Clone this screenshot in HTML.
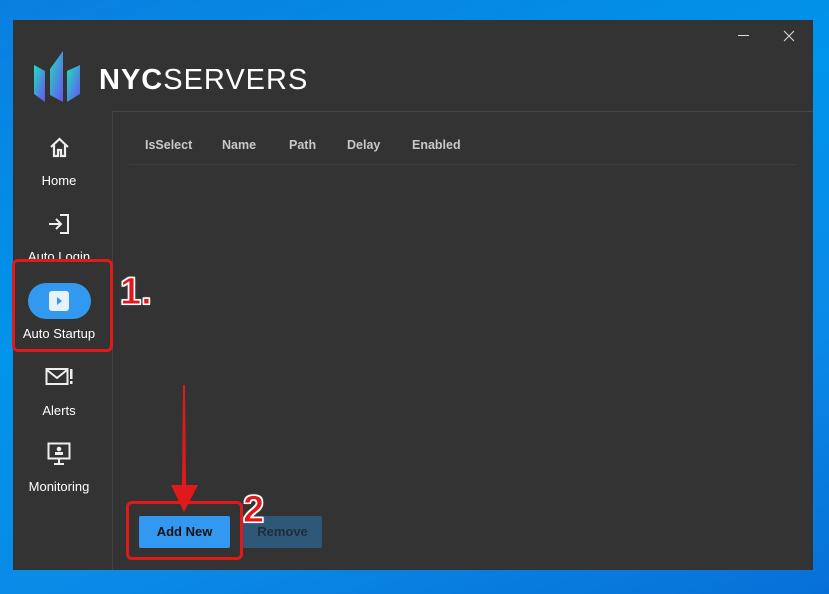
<!DOCTYPE html>
<html><head><meta charset="utf-8"><style>
*{margin:0;padding:0;box-sizing:border-box}
body{width:829px;height:594px;overflow:hidden;background:linear-gradient(160deg,#0a7fe0 0%,#0094ea 40%,#0a8ae6 70%,#0770d8 100%);font-family:"Liberation Sans",sans-serif;position:relative}
.win{position:absolute;left:13px;top:20px;width:800px;height:550px;background:#333}
.t{position:absolute;color:#fff;font-size:13px;text-align:center;width:92px;left:13px}
.hdr{position:absolute;top:138px;color:#c8c8c8;font-size:12.5px;font-weight:bold}
.ic{position:absolute}
.red{position:absolute;border:3px solid #e0191b;border-radius:6px}
.num{position:absolute;color:#e4161a;font-weight:bold;font-size:38px;line-height:44px;font-family:"Liberation Sans",sans-serif;-webkit-text-stroke:1px #fff;text-shadow:0 0 2px #fff,1px 1px 0 #fff,-1px -1px 0 #fff,1px -1px 0 #fff,-1px 1px 0 #fff}
</style></head><body>
<div class="win"></div>
<div style="position:absolute;left:738px;top:35px;width:11px;height:1px;background:#ddd"></div>
<svg class="ic" style="left:783px;top:30px" width="12" height="12"><path d="M1 1L11 11M11 1L1 11" stroke="#ddd" stroke-width="1"/></svg>
<svg class="ic" style="left:33px;top:50px" width="50" height="54">
<defs><linearGradient id="g" x1="0" y1="0" x2="1" y2="1"><stop offset="0" stop-color="#1de0c0"/><stop offset="1" stop-color="#6a50f0"/></linearGradient></defs>
<polygon points="1,15 12,21 12,52 1,44" fill="url(#g)"/>
<polygon points="17,19 30,1 30,52 17,45" fill="url(#g)"/>
<polygon points="34,21 47,15 47,44 34,52" fill="url(#g)"/>
</svg>
<div style="position:absolute;left:99px;top:62px;color:#fff;font-size:29px;letter-spacing:1px;line-height:36px"><b style="font-weight:900">NYC</b><span style="font-weight:300">SERVERS</span></div>
<div style="position:absolute;left:112px;top:111px;width:701px;height:1px;background:#444"></div>
<div style="position:absolute;left:112px;top:111px;width:1px;height:459px;background:#444"></div>
<div style="position:absolute;left:129px;top:164px;width:667px;height:1px;background:#3e3e3e"></div>
<div class="hdr" style="left:145px">IsSelect</div>
<div class="hdr" style="left:222px">Name</div>
<div class="hdr" style="left:289px">Path</div>
<div class="hdr" style="left:347px">Delay</div>
<div class="hdr" style="left:412px">Enabled</div>
<svg class="ic" style="left:49px;top:137px" width="21" height="21"><path d="M2 10L10.5 2L19 10M5 8V19H9V13H12V19H16V8" fill="none" stroke="#eee" stroke-width="2.2"/></svg>
<div class="t" style="top:173px">Home</div>
<svg class="ic" style="left:47px;top:213px" width="24" height="22"><path d="M2 11H14M9 6L14 11L9 16M13 2H21V20H13" fill="none" stroke="#eee" stroke-width="2"/></svg>
<div class="t" style="top:249px;height:13px;overflow:hidden">Auto Login</div>
<div style="position:absolute;left:28px;top:283px;width:63px;height:36px;border-radius:18px;background:#3399f0"></div>
<div style="position:absolute;left:49px;top:291px;width:20px;height:20px;border-radius:3px;background:#e8f2ff"></div>
<svg class="ic" style="left:56px;top:296px" width="8" height="10"><polygon points="1,1 6,5 1,9" fill="#3399f0"/></svg>
<div class="t" style="top:326px">Auto Startup</div>
<svg class="ic" style="left:45px;top:367px" width="30" height="20"><rect x="1.5" y="2" width="21" height="15" fill="none" stroke="#eee" stroke-width="2"/><path d="M2 3L12 11L22 3" fill="none" stroke="#eee" stroke-width="2"/><rect x="25" y="2" width="2.5" height="10" fill="#eee"/><rect x="25" y="14" width="2.5" height="3" fill="#eee"/></svg>
<div class="t" style="top:403px">Alerts</div>
<svg class="ic" style="left:47px;top:442px" width="24" height="24"><rect x="1.5" y="1.5" width="21" height="15" fill="none" stroke="#eee" stroke-width="2"/><circle cx="12" cy="7" r="2.3" fill="#eee"/><rect x="8" y="10" width="8" height="3" fill="#eee"/><rect x="11" y="17" width="2" height="4" fill="#eee"/><rect x="7" y="21" width="10" height="2" fill="#eee"/></svg>
<div class="t" style="top:479px">Monitoring</div>
<div style="position:absolute;left:139px;top:516px;width:91px;height:32px;background:#3399f0;border-radius:2px;color:#111;font-size:13px;font-weight:bold;text-align:center;line-height:32px">Add New</div>
<div style="position:absolute;left:243px;top:516px;width:79px;height:32px;background:#2f5878;border-radius:2px;color:#1e2e3c;font-size:13px;font-weight:bold;text-align:center;line-height:32px">Remove</div>
<div class="red" style="left:12px;top:259px;width:101px;height:93px"></div>
<div class="num" style="left:120px;top:270px">1.</div>
<div class="red" style="left:126px;top:501px;width:117px;height:59px"></div>
<div class="num" style="left:243px;top:488px">2</div>
<svg class="ic" style="left:168px;top:385px" width="34" height="130"><polygon points="15,0 17,0 18,100 30,100 16,127 3,100 14,100" fill="#e0191b"/></svg>
</body></html>
